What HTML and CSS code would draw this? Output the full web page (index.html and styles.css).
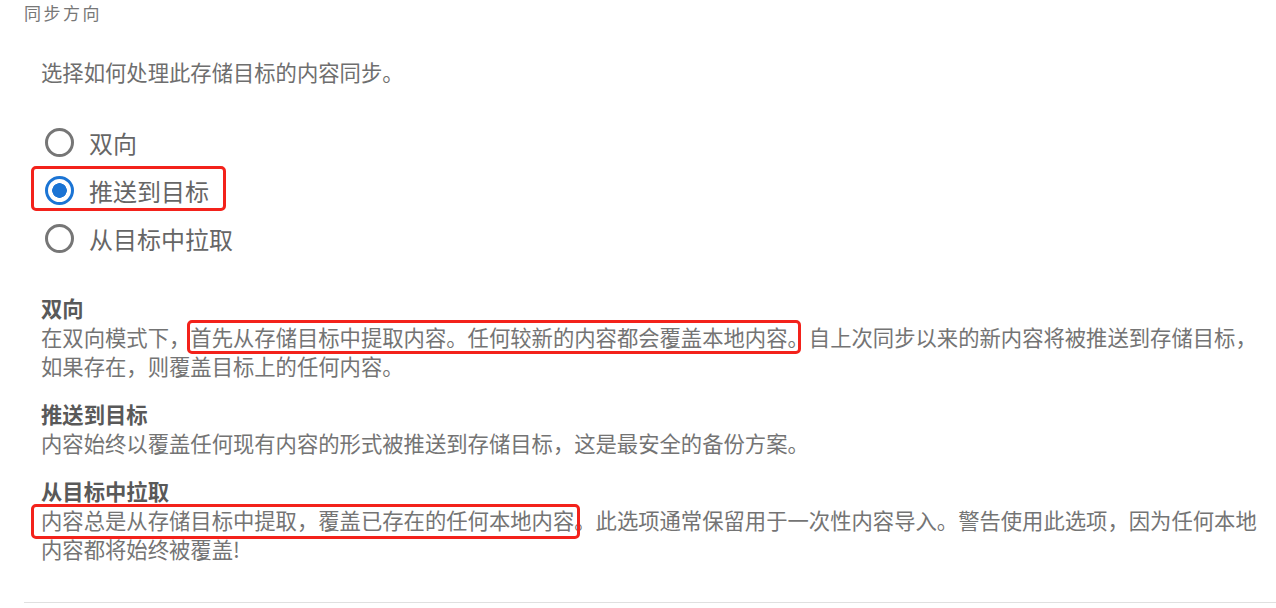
FILE: index.html
```html
<!DOCTYPE html>
<html lang="zh-CN">
    <head>
        <meta charset="UTF-8" />
        <meta name="viewport" content="width=device-width, initial-scale=1.0" />
        <title>同步方向</title>
        <link rel="stylesheet" href="styles.css">
    </head>
    <body>
        <div class="panel">
            <h3 class="title">同步方向</h3>
            <div class="content">
                <p class="desc">选择如何处理此存储目标的内容同步。</p>

                <div class="options">
                    <label class="option">
                        <input type="radio" name="direction" value="both" />
                        <span>双向</span>
                    </label>
                    <label class="option marked">
                        <input type="radio" name="direction" value="push" checked />
                        <span>推送到目标</span>
                    </label>
                    <label class="option">
                        <input type="radio" name="direction" value="pull" />
                        <span>从目标中拉取</span>
                    </label>
                </div>

                <div class="modes">
                    <div class="mode">
                        <h4>双向</h4>
                        <p>在双向模式下，<span class="mark mark-first">首先从存储目标中提取内容。任何较新的内容都会覆盖本地内容。</span>自上次同步以来的新内容将被推送到存储目标，如果存在，则覆盖目标上的任何内容。</p>
                    </div>
                    <div class="mode">
                        <h4>推送到目标</h4>
                        <p>内容始终以覆盖任何现有内容的形式被推送到存储目标，这是最安全的备份方案。</p>
                    </div>
                    <div class="mode">
                        <h4>从目标中拉取</h4>
                        <p><span class="mark mark-pull">内容总是从存储目标中提取，覆盖已存在的任何本地内容</span>。此选项通常保留用于一次性内容导入。警告使用此选项，因为任何本地内容都将始终被覆盖!</p>
                    </div>
                </div>
            </div>
            <hr class="divider" />
        </div>
    </body>
</html>
```

FILE: styles.css
```css
body {
    margin: 0;
    font-family: 'Noto Sans CJK SC', 'Noto Sans', sans-serif;
    color: #707070;
    background: #fff;
}
.panel {
    padding-left: 24px;
}
.title {
    margin: 0;
    font-size: 17px;
    font-weight: normal;
    line-height: 26px;
    letter-spacing: 2.5px;
    color: #777;
}
.content {
    padding: 0 10px 0 17px;
    font-size: 21.33px;
    line-height: 29px;
}
.desc {
    margin: 31px 0 0;
    color: #6e6e6e;
}
.options {
    margin-top: 32px;
    display: flex;
    flex-direction: column;
    gap: 3px;
    margin-left: -10px;
}
.option {
    display: flex;
    align-items: center;
    gap: 15px;
    width: max-content;
    height: 45px;
    box-sizing: border-box;
    padding: 3px 17px 0 14px;
    font-size: 24px;
    color: #666;
    border-radius: 5px;
    cursor: pointer;
}
.option.marked {
    outline: 3px solid #f3221b;
    outline-offset: -3px;
}
.option input {
    appearance: none;
    margin: 0;
    width: 29px;
    height: 29px;
    border: 3px solid #767676;
    border-radius: 50%;
    box-sizing: border-box;
    cursor: pointer;
}
.option input:checked {
    border-color: #1b74d4;
    background: radial-gradient(circle, #1b74d4 0 7px, transparent 7.6px);
}
.modes {
    margin-top: 34px;
}
.mode + .mode {
    margin-top: 19px;
}
.mode h4 {
    margin: 0;
    font-size: 21.33px;
    font-weight: bold;
    color: #595959;
}
.mode p {
    margin: 0;
    color: #747474;
}
.mark {
    position: relative;
}
.mark::after {
    content: "";
    position: absolute;
    border: 3px solid #f3221b;
    border-radius: 5px;
}
.mark-first::after {
    left: -3px;
    right: 8px;
    top: -1.5px;
    bottom: -1.5px;
}
.mark-pull::after {
    left: -10px;
    right: -6px;
    top: 0;
    bottom: -4px;
}
.divider {
    margin: 39px 0 0;
    border: none;
    border-top: 1px solid #e0e0e0;
}
```
